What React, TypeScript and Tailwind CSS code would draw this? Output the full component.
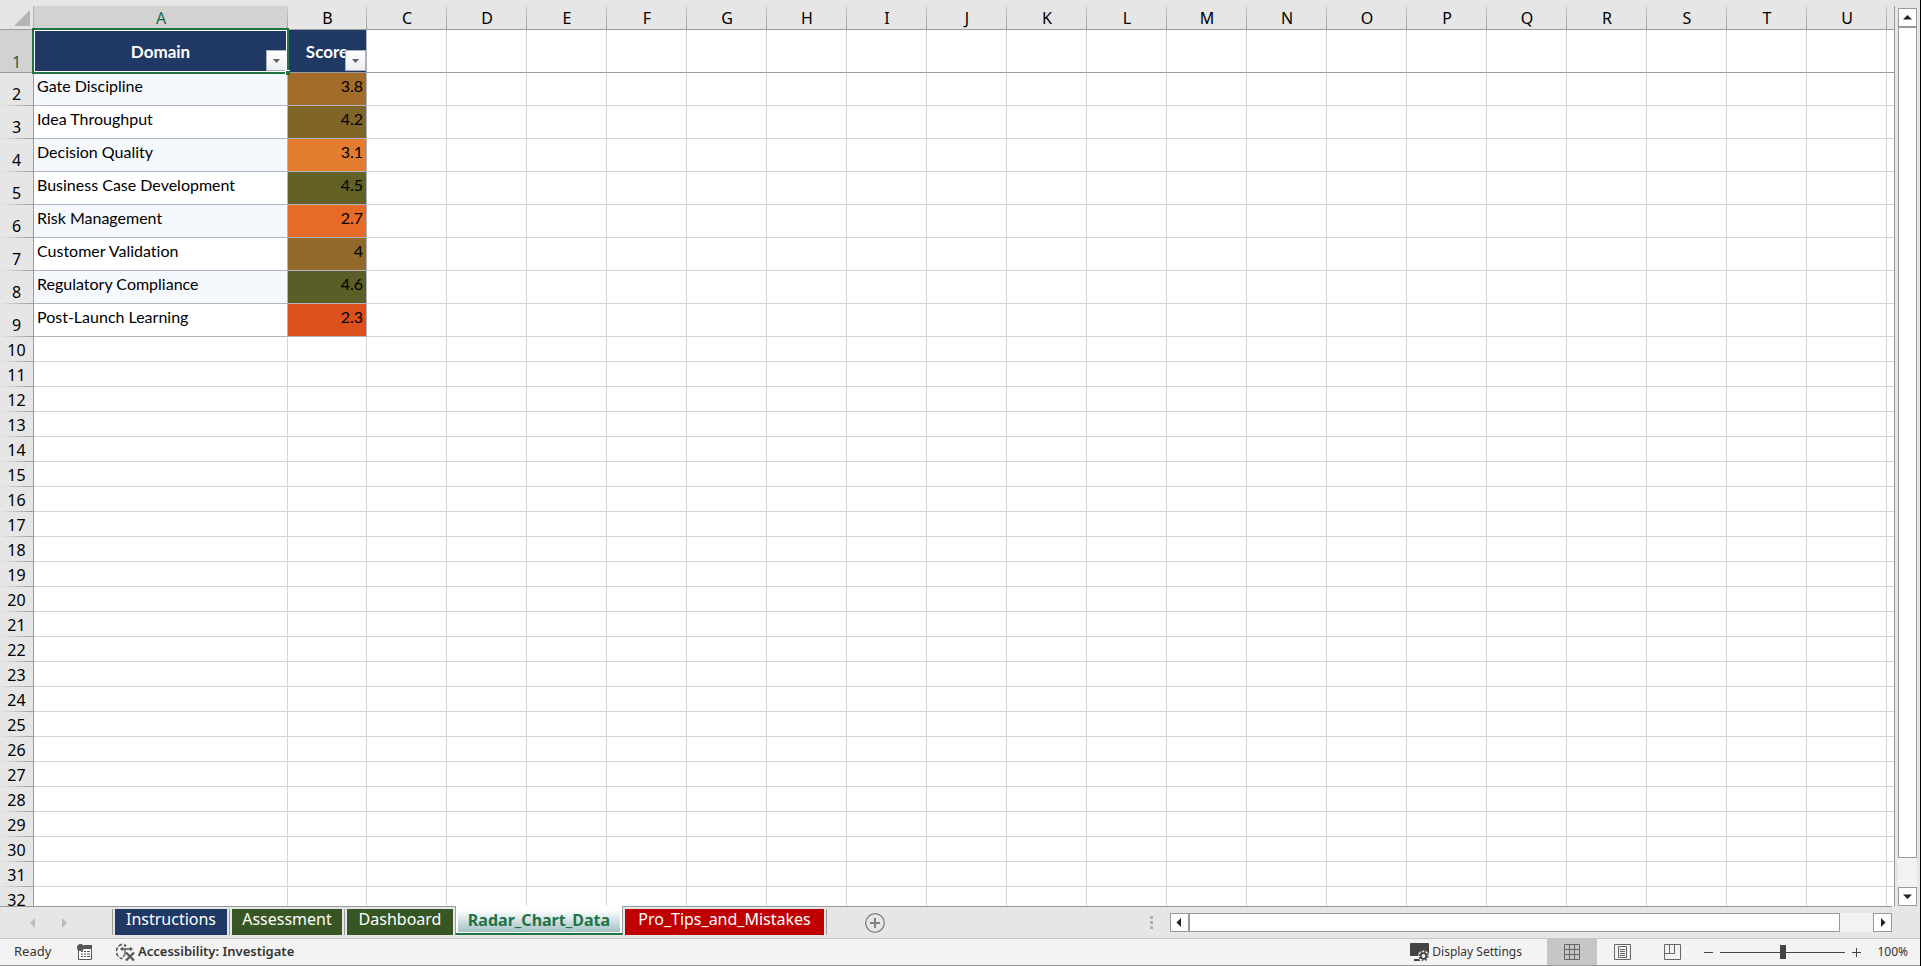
import type { ReactNode } from 'react'

const COLUMNS = 'ABCDEFGHIJKLMNOPQRSTU'.split('')

// Domain scores, shaded by the color scale rule
const SCORES = [
  { domain: 'Gate Discipline', score: 3.8, fill: 'bg-[#a36c2b]' },
  { domain: 'Idea Throughput', score: 4.2, fill: 'bg-[#7f6528]' },
  { domain: 'Decision Quality', score: 3.1, fill: 'bg-[#e57d31]' },
  { domain: 'Business Case Development', score: 4.5, fill: 'bg-[#636026]' },
  { domain: 'Risk Management', score: 2.7, fill: 'bg-[#e66b29]' },
  { domain: 'Customer Validation', score: 4, fill: 'bg-[#916929]' },
  { domain: 'Regulatory Compliance', score: 4.6, fill: 'bg-[#5a5d25]' },
  { domain: 'Post-Launch Learning', score: 2.3, fill: 'bg-[#dc501d]' },
]

const EMPTY_ROWS = Array.from({ length: 23 }, (_, i) => i + 10)

const ROW_LINE =
  'bg-[linear-gradient(to_right,#e6e6e6,#9b9b9b)] bg-[length:100%_1px] bg-bottom bg-no-repeat'
const COL_LINE =
  'bg-[linear-gradient(to_bottom,#d0d0d0,#9b9b9b)] bg-[length:1px_100%] bg-right bg-no-repeat'

function FilterButton({ label }: { label: string }) {
  return (
    <button
      aria-label={label}
      className="absolute right-0 bottom-px z-10 flex h-[21px] w-[21px] items-center justify-center border border-[#acb0b9] bg-linear-to-b from-white to-[#eceef3]"
    >
      <svg width="7" height="4" viewBox="0 0 7 4" fill="#5f5f5f">
        <path d="M0 0h7L3.5 4z" />
      </svg>
    </button>
  )
}

function RowNumber({ n }: { n: number }) {
  return (
    <th
      scope="row"
      className={`border-r border-[#9b9b9b] bg-[#e6e6e6] p-0 text-center align-bottom font-['Noto_Sans',sans-serif] text-base leading-6 font-normal ${ROW_LINE}`}
    >
      {n}
    </th>
  )
}

// Blank cells from the given column to the edge of the window
function BlankCells({ from, frozen }: { from: number; frozen?: boolean }) {
  const line = frozen ? 'border-b-[#9b9b9b]' : 'border-b-[#d4d4d4]'
  return (
    <>
      {COLUMNS.slice(from).map((c) => (
        <td key={c} className={`border-r border-b border-r-[#d4d4d4] p-0 ${line}`} />
      ))}
      <td className={`border-b p-0 ${line}`} />
    </>
  )
}

function Sheet() {
  return (
    <table className="w-full table-fixed border-separate border-spacing-0 font-[Lato,sans-serif] text-base text-black [font-variant-ligatures:none]">
      <colgroup>
        <col className="w-[34px]" />
        <col className="w-[254px]" />
        <col className="w-[79px]" />
        {COLUMNS.slice(2).map((c) => (
          <col key={c} className="w-20" />
        ))}
        <col />
      </colgroup>
      <thead>
        <tr className="h-6 bg-[#e6e6e6] font-['Noto_Sans',sans-serif] leading-5">
          <td className="border-r border-b border-r-[#b0b0b0] border-b-[#9b9b9b] p-0">
            <svg className="mr-[3px] ml-auto block" width="16" height="16" fill="#b4b4b4">
              <path d="M16 0v16H0z" />
            </svg>
          </td>
          {COLUMNS.map((c) => (
            <th
              key={c}
              scope="col"
              className={`border-b border-[#9b9b9b] p-0 font-normal ${COL_LINE} ${
                c === 'A' ? 'bg-[#d2d2d2] text-[#1f6342]' : ''
              }`}
            >
              {c}
            </th>
          ))}
          <td className="border-b border-[#9b9b9b] p-0" />
        </tr>
      </thead>
      <tbody>
        <tr className="h-[43px]">
          <th
            scope="row"
            className="border-r border-b border-[#9b9b9b] bg-[#d2d2d2] p-0 align-bottom font-['Noto_Sans',sans-serif] leading-5 font-normal text-[#1f6342]"
          >
            1
          </th>
          <td className="relative border-r border-b border-r-[#aeb4c0] border-b-[#9b9b9b] bg-[#203864] p-0 pt-0.5 text-center text-[17px] font-bold text-white">
            Domain
            <FilterButton label="Filter Domain" />
            {/* Active cell outline and fill handle */}
            <div className="pointer-events-none absolute -inset-0.5 z-20 border-2 border-[#217346]">
              <div className="h-full border border-white" />
              <div className="absolute -right-[3px] -bottom-[3px] h-[5px] w-[5px] border-t border-l border-white bg-[#217346]" />
            </div>
          </td>
          <td className="relative border-r border-b border-r-[#aeb4c0] border-b-[#9b9b9b] bg-[#203864] p-0 pt-0.5 text-center text-[17px] font-bold text-white">
            Score
            <FilterButton label="Filter Score" />
          </td>
          <BlankCells from={2} frozen />
        </tr>
        {SCORES.map((row, i) => (
          <tr key={row.domain} className="h-[33px]">
            <RowNumber n={i + 2} />
            <td
              className={`border-r border-b border-[#aeb4c0] p-0 pb-1.5 pl-[3px] ${
                i % 2 === 0 ? 'bg-[#f5f9fe]' : 'bg-white'
              }`}
            >
              {row.domain}
            </td>
            <td className={`border-r border-b border-[#aeb4c0] p-0 pr-[3px] pb-1.5 text-right ${row.fill}`}>
              {row.score}
            </td>
            <BlankCells from={2} />
          </tr>
        ))}
        {EMPTY_ROWS.map((n) => (
          <tr key={n} className="h-[25px]">
            <RowNumber n={n} />
            <BlankCells from={0} />
          </tr>
        ))}
      </tbody>
    </table>
  )
}

function ScrollButton({ label, d }: { label: string; d: string }) {
  return (
    <button
      aria-label={label}
      className="flex h-[19px] w-[19px] shrink-0 items-center justify-center border border-[#999] bg-white"
    >
      <svg width="9" height="9" viewBox="0 0 9 9" fill="#222">
        <path d={d} />
      </svg>
    </button>
  )
}

function SheetTab({ name, className }: { name: string; className: string }) {
  return (
    <div className="flex h-[26px] items-center border-r border-[#9b9b9b] px-0.5">
      <button className={`h-[26px] pb-1.5 text-center text-white ${className}`}>{name}</button>
    </div>
  )
}

function TabBar() {
  return (
    <div className="flex h-[33px] shrink-0 border-b border-[#c6c6c6] bg-[#e6e6e6]">
      <div className="flex h-full w-[112px] items-center gap-[27px] border-t border-[#9b9b9b] pl-[30px]">
        <button aria-label="Previous sheet">
          <svg width="5" height="10" fill="#bdbdbd">
            <path d="M5 0v10L0 5z" />
          </svg>
        </button>
        <button aria-label="Next sheet">
          <svg width="5" height="10" fill="#bdbdbd">
            <path d="M0 0v10l5-5z" />
          </svg>
        </button>
      </div>
      <div className="flex font-['Noto_Sans',sans-serif] text-base leading-5">
        <div className="flex border-t border-[#9b9b9b] pt-0.5">
          <div className="h-[26px] w-px bg-[#9b9b9b]" />
          <SheetTab name="Instructions" className="w-28 bg-[#203864]" />
          <SheetTab name="Assessment" className="w-[110px] bg-[#385623]" />
          <div className="px-0.5">
            <button className="h-[26px] w-[106px] bg-[#385623] pb-1.5 text-white">Dashboard</button>
          </div>
        </div>
        <div className="flex h-[29px] w-[168px] flex-col border-x border-b-2 border-x-[#9b9b9b] border-b-[#217346] bg-white px-0.5 pt-1">
          <button className="h-[22px] bg-linear-to-b from-white to-[#a3c2c6] pb-1 font-bold text-[#217346]">
            Radar_Chart_Data
          </button>
        </div>
        <div className="flex border-t border-[#9b9b9b] pt-0.5">
          <SheetTab name="Pro_Tips_and_Mistakes" className="w-[199px] bg-[#c00000]" />
        </div>
      </div>
      <div className="flex flex-1 items-center border-t border-[#9b9b9b] pl-[38px]">
        <button aria-label="New sheet">
          <svg width="20" height="20" viewBox="0 0 20 20" fill="none" stroke="#808080">
            <circle cx="10" cy="10" r="9.3" strokeWidth="1.3" />
            <path d="M10 5v10M5 10h10" strokeWidth="2" />
          </svg>
        </button>
      </div>
      <div className="flex w-[742px] items-center border-t border-[#9b9b9b]">
        <div className="flex w-5 flex-col gap-0.5">
          <span className="h-[3px] w-[3px] bg-[#b0b0b0]" />
          <span className="h-[3px] w-[3px] bg-[#b0b0b0]" />
          <span className="h-[3px] w-[3px] bg-[#b0b0b0]" />
        </div>
        <div className="flex flex-1 bg-[#f2f2f2]">
          <ScrollButton label="Scroll left" d="M6 0v9L1.500 4.500z" />
          <div className="mr-[33px] flex-1 border border-[#999] bg-white" />
          <ScrollButton label="Scroll right" d="M3 0v9l4.500-4.500z" />
        </div>
      </div>
      <div className="w-7" />
    </div>
  )
}

function ViewButton({ label, active, children }: { label: string; active?: boolean; children: ReactNode }) {
  return (
    <button
      aria-label={label}
      className={`flex h-full w-[50px] items-center justify-center ${active ? 'bg-[#c6c6c6]' : ''}`}
    >
      <svg width="17" height="16" viewBox="0 0 17 16" fill="none" stroke="#666">
        {children}
      </svg>
    </button>
  )
}

function StatusBar() {
  return (
    <div className="flex h-[27px] shrink-0 items-center border-b border-[#999] bg-[#f3f3f3] font-['Noto_Sans',sans-serif] text-[13px] text-[#333]">
      <span className="w-[63px] pl-3.5">Ready</span>
      <button aria-label="Record macro" className="ml-3.5">
        <svg width="15" height="16" viewBox="0 0 15 16">
          <path d="M1.5 5v10.5h13V2.500" fill="#fff" stroke="#555" />
          <path d="M7 1h8v4H6z" fill="#555" />
          <path d="M4 7.500h2m1 0h2m1 0h3M4 10h2m1 0h2m1 0h3M4 12.500h2m1 0h2m1 0h3" stroke="#555" />
          <circle cx="3.5" cy="3.5" r="3.5" fill="#555" />
        </svg>
      </button>
      <button className="ml-6 flex items-center gap-[3px] font-semibold">
        <svg width="19" height="18" viewBox="0 0 19 18" fill="none" stroke="#555">
          <path d="M6 1.200A7.500 7.500 0 0 0 6.500 15.800" strokeWidth="1.5" strokeDasharray="4 1.500" />
          <circle cx="9" cy="2.500" r="1.200" fill="#555" stroke="none" />
          <path d="M5 6h11M7 4.500 5 6l2 1.500M14 4.500 16 6l-2 1.500M9 6v5l-2 3" strokeWidth="1.3" />
          <path d="M10 9.500l8 8m0-8-8 8" strokeWidth="2.200" />
        </svg>
        Accessibility: Investigate
      </button>
      <button className="ml-auto flex items-center gap-[3px] text-xs">
        <svg width="19" height="18" viewBox="0 0 19 18">
          <path d="M1 0h17a1 1 0 0 1 1 1v12H0V1a1 1 0 0 1 1-1zM4 16h6v2H4z" fill="#444" />
          <circle cx="13.5" cy="13" r="5.500" fill="#f3f3f3" />
          <circle cx="13.5" cy="13" r="2.800" fill="none" stroke="#444" strokeWidth="1.800" />
          <circle cx="13.5" cy="13" r="4.300" fill="none" stroke="#444" strokeWidth="1.500" strokeDasharray="1.700 1.677" />
        </svg>
        Display Settings
      </button>
      <div className="ml-[25px] flex h-full">
        <ViewButton label="Normal" active>
          <path d="M.5.5h15v15H.5zM5.5.5v15M10.5.5v15M.5 5.500h15M.5 10.500h15" />
        </ViewButton>
        <ViewButton label="Page Layout">
          <path d="M.5.5h16v15H.5zM4.5 2.500h8v11h-8zM6 5.500h5M6 7.500h5M6 9.500h5M6 11.500h5" />
        </ViewButton>
        <ViewButton label="Page Break Preview">
          <path d="M.5.5h16v15H.5zM.5 9.500h10v-9M5.5.5v9" />
        </ViewButton>
      </div>
      <button aria-label="Zoom out" className="ml-[7px]">
        <svg width="9" height="9" stroke="#444">
          <path d="M0 4.500h9" />
        </svg>
      </button>
      <input
        type="range"
        aria-label="Zoom"
        className="mx-[7px] h-3.5 w-[125px] appearance-none bg-[linear-gradient(#444,#444)] bg-[length:100%_1px] bg-center bg-no-repeat [&::-webkit-slider-thumb]:h-3.5 [&::-webkit-slider-thumb]:w-1.5 [&::-webkit-slider-thumb]:appearance-none [&::-webkit-slider-thumb]:bg-[#444]"
      />
      <button aria-label="Zoom in">
        <svg width="9" height="9" stroke="#444">
          <path d="M0 4.500h9M4.500 0v9" />
        </svg>
      </button>
      <span className="w-[59px] pr-3 text-right text-xs">100%</span>
    </div>
  )
}

export default function App() {
  return (
    <div className="flex h-screen flex-col overflow-hidden border-r border-black bg-[#e6e6e6]">
      <div className="flex min-h-0 flex-1 pt-1.5">
        <div className="min-w-0 flex-1 overflow-hidden border-r border-[#9b9b9b] bg-white">
          <Sheet />
        </div>
        <div className="flex w-[25px] flex-col pt-0.5 pl-[3px]">
          <ScrollButton label="Scroll up" d="M0 6.500h9L4.500 2z" />
          <div className="w-[19px] flex-1 border border-[#999] bg-white" />
          <div className="h-[29px] w-[19px] bg-[#f2f2f2]" />
          <ScrollButton label="Scroll down" d="M0 2.500h9L4.500 7z" />
        </div>
      </div>
      <TabBar />
      <StatusBar />
    </div>
  )
}
